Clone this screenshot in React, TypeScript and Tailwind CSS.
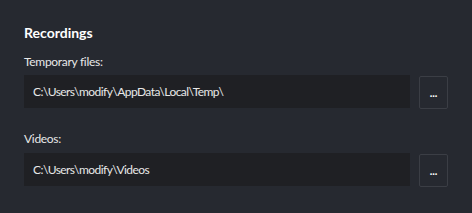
function PathRow({ path }: { path: string }) {
  return (
    <div className="flex items-start gap-[9px]">
      <div className="flex h-[33px] w-[388px] items-center bg-[#1f2024] pl-[9px] text-[12px] tracking-[-0.55px] text-[#e8e8e8]">
        {path}
      </div>
      <button className="mt-[1px] flex h-[33px] w-[29px] items-center justify-center rounded-[2px] border border-[#3b3e45] bg-[#262930] text-[11px] font-bold leading-none text-white">
        ...
      </button>
    </div>
  );
}

export default function App() {
  return (
    <div
      className="h-[213px] w-[472px] bg-[#262930] px-[24px] pt-[23px]"
      style={{ fontFamily: 'Lato, "Noto Sans", sans-serif' }}
    >
      <h2 className="text-[14px] font-bold leading-[20px] text-white">Recordings</h2>
      <div className="mt-[10px] text-[12px] leading-[18px] tracking-[-0.3px] text-[#e8e8e8]">Temporary files:</div>
      <div className="mt-[4px]">
        <PathRow path="C:\Users\modify\AppData\Local\Temp\" />
      </div>
      <div className="mt-[21px] text-[12px] leading-[18px] tracking-[-0.3px] text-[#e8e8e8]">Videos:</div>
      <div className="mt-[5px]">
        <PathRow path="C:\Users\modify\Videos" />
      </div>
    </div>
  );
}
